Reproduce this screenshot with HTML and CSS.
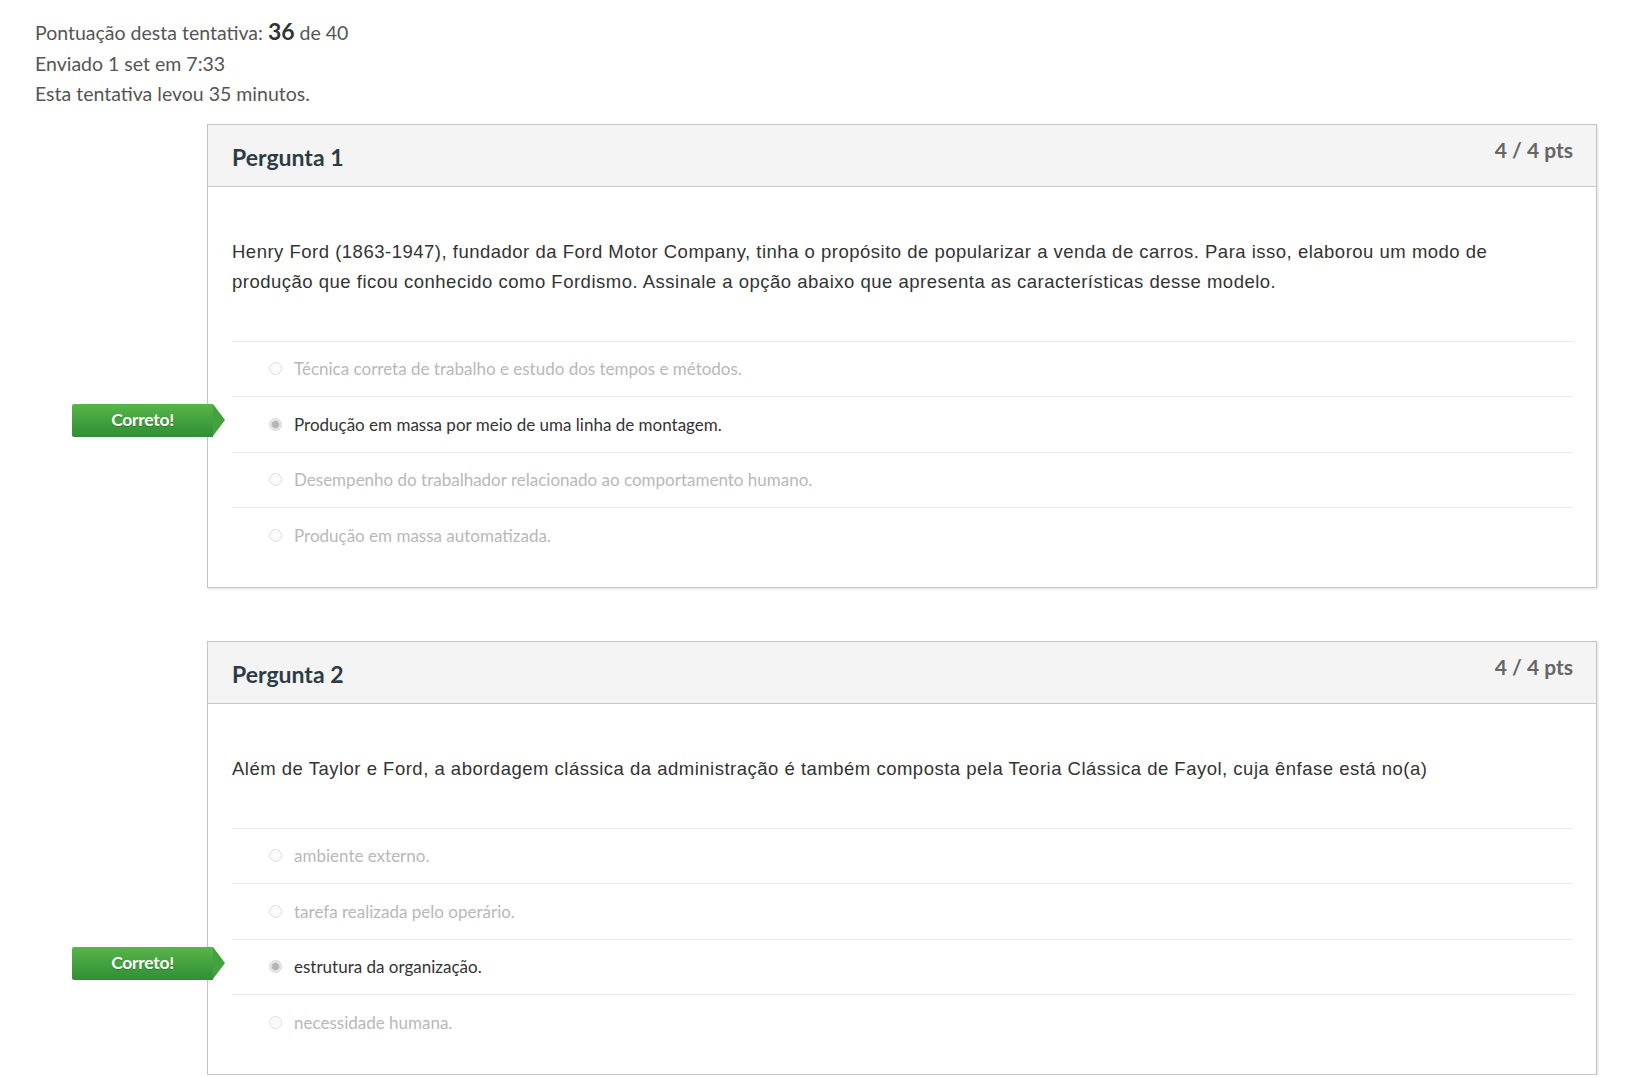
FILE: index.html
```html
<!DOCTYPE html>
<html lang="pt">
<head>
  <meta charset="UTF-8">
  <title>Resultado do teste</title>
  <link rel="stylesheet" href="styles.css">
</head>
<body>
  <div class="summary">
    <div>Pontuação desta tentativa: <span class="score">36</span> de 40</div>
    <div>Enviado 1 set em 7:33</div>
    <div>Esta tentativa levou 35 minutos.</div>
  </div>

  <div class="question">
    <div class="header">
      <span class="title">Pergunta 1</span>
      <span class="points">4 / 4 pts</span>
    </div>
    <div class="body">
      <div class="text">Henry Ford (1863-1947), fundador da Ford Motor Company, tinha o propósito de popularizar a venda de carros. Para isso, elaborou um modo de produção que ficou conhecido como Fordismo. Assinale a opção abaixo que apresenta as características desse modelo.</div>
      <div class="answers">
        <div class="answer"><span class="radio"></span>Técnica correta de trabalho e estudo dos tempos e métodos.</div>
        <div class="answer selected"><span class="badge">Correto!</span><span class="radio"></span>Produção em massa por meio de uma linha de montagem.</div>
        <div class="answer"><span class="radio"></span>Desempenho do trabalhador relacionado ao comportamento humano.</div>
        <div class="answer"><span class="radio"></span>Produção em massa automatizada.</div>
      </div>
    </div>
  </div>

  <div class="question">
    <div class="header">
      <span class="title">Pergunta 2</span>
      <span class="points">4 / 4 pts</span>
    </div>
    <div class="body">
      <div class="text">Além de Taylor e Ford, a abordagem clássica da administração é também composta pela Teoria Clássica de Fayol, cuja ênfase está no(a)</div>
      <div class="answers">
        <div class="answer"><span class="radio"></span>ambiente externo.</div>
        <div class="answer"><span class="radio"></span>tarefa realizada pelo operário.</div>
        <div class="answer selected"><span class="badge">Correto!</span><span class="radio"></span>estrutura da organização.</div>
        <div class="answer"><span class="radio"></span>necessidade humana.</div>
      </div>
    </div>
  </div>
</body>
</html>
```

FILE: styles.css
```css
body {
  margin: 0;
  padding: 16px 28px 0 35px;
  background: #fff;
  font-family: Lato, "Open Sans", sans-serif;
  color: #555;
}
.summary {
  font-size: 19.5px;
  line-height: 30.5px;
  color: #555;
}
.summary .score {
  font-size: 23px;
  font-weight: bold;
  color: #333;
}
.question {
  margin: 14px 0 0 172px;
  border: 1px solid #c4c4c4;
  box-shadow: 1px 1px 2px rgba(0, 0, 0, 0.12);
  background: #fff;
}
.question + .question {
  margin-top: 53px;
}
.header {
  height: 61px;
  background: #f4f4f4;
  border-bottom: 1px solid #c8c8c8;
  display: flex;
  justify-content: space-between;
  padding: 0 23px 0 24px;
}
.title {
  font-size: 23px;
  font-weight: bold;
  color: #2d3b45;
  padding-top: 18px;
}
.points {
  font-size: 21px;
  font-weight: bold;
  color: #666;
  padding-top: 12px;
}
.body {
  padding: 50px 23px 24px 24px;
}
.text {
  font-family: "Liberation Sans", Arial, sans-serif;
  font-size: 18.5px;
  letter-spacing: 0.5px;
  line-height: 30px;
  color: #333;
  margin-bottom: 44px;
}
.answer {
  position: relative;
  height: 54.5px;
  border-top: 1px solid #ebebeb;
  display: flex;
  align-items: center;
  padding-left: 37px;
  font-size: 17px;
  color: #b8b8b8;
}
.answer.selected {
  color: #333;
}
.radio {
  width: 13px;
  height: 13px;
  border: 1px solid #e0e0e0;
  border-radius: 50%;
  margin-right: 12px;
  box-sizing: border-box;
  background: #fafafa;
}
.selected .radio {
  background: radial-gradient(circle, #b5b5b5 0, #b5b5b5 3px, #e8e8e8 4.5px);
  border-color: #d8d8d8;
}
.badge {
  position: absolute;
  left: -160px;
  top: 7px;
  width: 141px;
  height: 33px;
  line-height: 32px;
  text-align: center;
  color: #fff;
  font-weight: bold;
  font-size: 17.5px;
  letter-spacing: -0.3px;
  background: linear-gradient(#58b54a, #2f8f33);
  border-radius: 2px 0 0 2px;
  text-shadow: 0 1px 1px rgba(0, 0, 0, 0.25);
}
.badge::after {
  content: "";
  position: absolute;
  left: 141px;
  top: 0;
  border-style: solid;
  border-width: 16.5px 0 16.5px 12px;
  border-color: transparent transparent transparent #43a13e;
}
```
